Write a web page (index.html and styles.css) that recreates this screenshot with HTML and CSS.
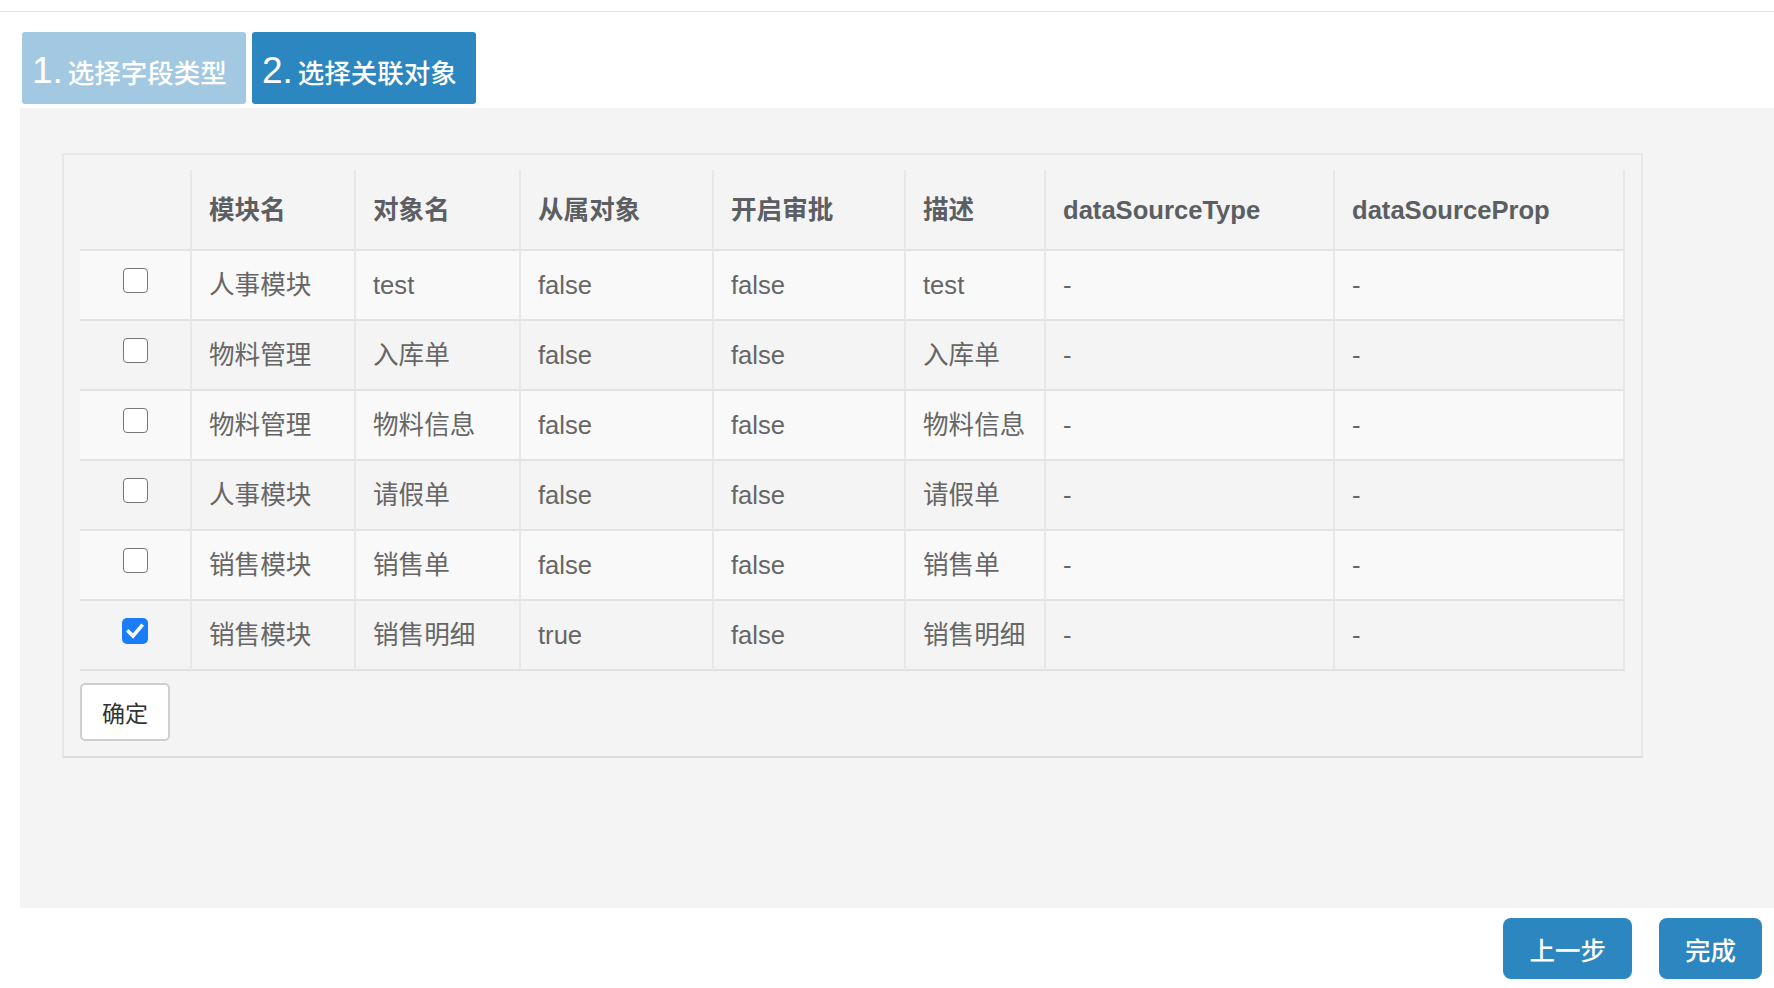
FILE: index.html
```html
<!DOCTYPE html>
<html lang="zh">
<head>
<meta charset="utf-8">
<title>选择关联对象</title>
<link rel="stylesheet" href="styles.css">
</head>
<body>
<div class="topbar"></div>
<div class="steps">
  <div class="step step-done"><span class="num">1.</span><span class="label">选择字段类型</span></div>
  <div class="step step-active"><span class="num">2.</span><span class="label">选择关联对象</span></div>
</div>
<div class="stage">
  <div class="panel">
    <table class="grid">
      <colgroup>
        <col class="c-check"><col class="c-mod"><col class="c-obj"><col class="c-sub"><col class="c-appr"><col class="c-desc"><col class="c-dst"><col class="c-dsp">
      </colgroup>
      <thead>
        <tr><th></th><th>模块名</th><th>对象名</th><th>从属对象</th><th>开启审批</th><th>描述</th><th>dataSourceType</th><th>dataSourceProp</th></tr>
      </thead>
      <tbody>
        <tr><td class="chk"><span class="cb"></span></td><td>人事模块</td><td>test</td><td>false</td><td>false</td><td>test</td><td>-</td><td>-</td></tr>
        <tr><td class="chk"><span class="cb"></span></td><td>物料管理</td><td>入库单</td><td>false</td><td>false</td><td>入库单</td><td>-</td><td>-</td></tr>
        <tr><td class="chk"><span class="cb"></span></td><td>物料管理</td><td>物料信息</td><td>false</td><td>false</td><td>物料信息</td><td>-</td><td>-</td></tr>
        <tr><td class="chk"><span class="cb"></span></td><td>人事模块</td><td>请假单</td><td>false</td><td>false</td><td>请假单</td><td>-</td><td>-</td></tr>
        <tr><td class="chk"><span class="cb"></span></td><td>销售模块</td><td>销售单</td><td>false</td><td>false</td><td>销售单</td><td>-</td><td>-</td></tr>
        <tr><td class="chk"><span class="cb cb-on"><svg viewBox="0 0 26 26" width="26" height="26"><path d="M6.5 13.5 L11 18 L19.5 8" fill="none" stroke="#fff" stroke-width="3.6" stroke-linecap="square" stroke-linejoin="miter"/></svg></span></td><td>销售模块</td><td>销售明细</td><td>true</td><td>false</td><td>销售明细</td><td>-</td><td>-</td></tr>
      </tbody>
    </table>
    <button class="btn-ok" type="button">确定</button>
  </div>
</div>
<div class="footer">
  <button class="btn-primary" type="button">上一步</button>
  <button class="btn-primary" type="button">完成</button>
</div>
</body>
</html>
```
FILE: styles.css
```css
html, body {
  margin: 0;
  padding: 0;
  background: #ffffff;
  font-family: "Liberation Sans", "Noto Sans CJK SC", sans-serif;
}

.topbar {
  height: 11px;
  border-bottom: 1px solid #e3e3e3;
}

.steps {
  display: flex;
  gap: 6px;
  margin: 20px 0 0 22px;
}

.step {
  width: 224px;
  height: 72px;
  box-sizing: border-box;
  border-radius: 3px;
  display: flex;
  align-items: center;
  padding: 4px 0 0 10px;
  color: #ffffff;
}

.step-done { background: #a3c9e2; }
.step-active { background: #2c86bf; }

.step .num {
  font-family: "Liberation Sans", sans-serif;
  font-size: 37px;
  line-height: 1;
  margin-right: 5px;
}

.step .label {
  font-family: "Noto Sans CJK SC", sans-serif;
  font-size: 26.5px;
  font-weight: 500;
  line-height: 1;
  margin-top: 4px;
}

.stage {
  margin: 4px 0 0 20px;
  height: 800px;
  background: #f4f4f4;
  padding: 45px 0 0 42px;
  box-sizing: border-box;
}

.panel {
  width: 1581px;
  box-sizing: border-box;
  border: 2px solid #e7e7e7;
  border-bottom-color: #dcdcdc;
  padding: 15px 16px 15px 16px;
}

.grid {
  width: 1545px;
  table-layout: fixed;
  border-collapse: separate;
  border-spacing: 0;
  color: #666666;
  font-size: 25.6px;
}

.c-check { width: 112px; }
.c-mod { width: 164px; }
.c-obj { width: 165px; }
.c-sub { width: 193px; }
.c-appr { width: 192px; }
.c-desc { width: 140px; }
.c-dst { width: 289px; }
.c-dsp { width: 290px; }

.grid th,
.grid td {
  box-sizing: border-box;
  border-right: 2px solid #e8e8e8;
  border-bottom: 2px solid #e2e2e2;
  padding: 0 0 0 17px;
  text-align: left;
  vertical-align: middle;
  line-height: 30px;
  white-space: nowrap;
  font-family: "Liberation Sans", "Noto Sans CJK SC", sans-serif;
}

.grid th {
  height: 81px;
  font-weight: bold;
  color: #5b5e62;
}

.grid td {
  height: 70px;
}

.grid tbody tr:nth-child(odd) td {
  background: #f9f9f9;
}

.grid td.chk {
  padding: 0;
  text-align: center;
}

.cb {
  display: block;
  width: 25px;
  height: 25px;
  box-sizing: border-box;
  margin: 0 auto 9px;
  border: 1.5px solid #777777;
  border-radius: 4px;
  background: #ffffff;
}

.cb-on {
  width: 26px;
  height: 26px;
  border: none;
  background: #1a7cf6;
  border-radius: 5px;
  overflow: hidden;
}

.cb-on svg {
  display: block;
}

.btn-ok {
  display: block;
  margin-top: 12px;
  width: 90px;
  height: 58px;
  box-sizing: border-box;
  border: 2px solid #cfcfcf;
  border-radius: 5px;
  background: #ffffff;
  color: #333333;
  font-family: "Noto Sans CJK SC", sans-serif;
  font-size: 23px;
  padding: 0;
}

.footer {
  display: flex;
  justify-content: flex-end;
  gap: 27px;
  padding: 10px 12px 0 0;
}

.btn-primary {
  height: 61px;
  padding: 0 26px;
  border: none;
  border-radius: 8px;
  background: #2c86bf;
  color: #ffffff;
  font-family: "Noto Sans CJK SC", sans-serif;
  font-size: 25.5px;
  font-weight: 500;
}
```
